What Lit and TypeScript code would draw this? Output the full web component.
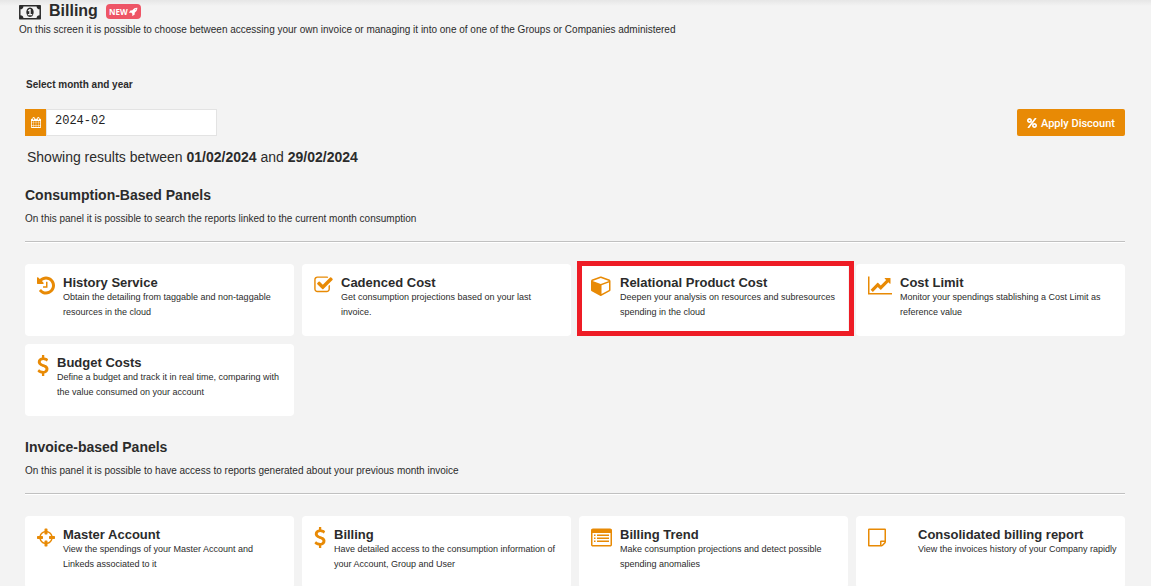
import { LitElement, html, css, svg, nothing } from "lit";
import { customElement, property } from "lit/decorators.js";

interface Glyph {
  box: string;
  width: number;
  path: string;
}

const glyphs: Record<string, Glyph> = {
  money: {
    box: "0 0 1920 1664",
    width: 22,
    path: "M768 1152h384v-96h-128v-448h-114l-148 137 77 80q42-37 55-57h2v288h-128v96zm512-256q0 70-21 142t-59.5 134-101.5 101-138 39-138-39-101.5-101-59.5-134-21-142 21-142 59.5-134 101.5-101 138-39 138 39 101.5 101 59.5 134 21 142zm512 256v-512q-106 0-181-75t-75-181h-1152q0 106-75 181t-181 75v512q106 0 181 75t75 181h1152q0-106 75-181t181-75zm128-832v1152q0 26-19 45t-45 19h-1792q-26 0-45-19t-19-45v-1152q0-26 19-45t45-19h1792q26 0 45 19t19 45z",
  },
  rocket: {
    box: "0 0 1792 1792",
    width: 9,
    path: "M1440 448q0-40-28-68t-68-28-68 28-28 68 28 68 68 28 68-28 28-68zm224-288q0 249-75.5 430.5t-253.5 360.5q-81 80-195 176l-20 379q-2 16-16 26l-384 224q-7 4-16 4-12 0-23-9l-64-64q-13-14-8-32l85-276-281-281-276 85q-3 1-9 1-14 0-23-9l-64-64q-17-19-5-39l224-384q10-14 26-16l379-20q96-114 176-195 188-187 358-258t431-71q14 0 24 9.5t10 22.5z",
  },
  calendar: {
    box: "64 0 1664 1792",
    width: 10,
    path: "M192 1664h288v-288h-288v288zm352 0h320v-288h-320v288zm-352-352h288v-320h-288v320zm352 0h320v-320h-320v320zm-352-384h288v-288h-288v288zm736 736h320v-288h-320v288zm-384-736h320v-288h-320v288zm768 736h288v-288h-288v288zm-384-352h320v-320h-320v320zm-352-864v-288q0-13-9.500-22.500t-22.500-9.500h-64q-13 0-22.500 9.500t-9.500 22.500v288q0 13 9.500 22.500t22.500 9.500h64q13 0 22.500-9.500t9.500-22.500zm736 864h288v-320h-288v320zm-384-384h320v-288h-320v288zm384 0h288v-288h-288v288zm32-480v-288q0-13-9.500-22.500t-22.500-9.500h-64q-13 0-22.500 9.500t-9.500 22.500v288q0 13 9.500 22.500t22.500 9.500h64q13 0 22.500-9.500t9.500-22.500zm384-64v1280q0 52-38 90t-90 38h-1408q-52 0-90-38t-38-90v-1280q0-52 38-90t90-38h128v-96q0-66 47-113t113-47h64q66 0 113 47t47 113v96h384v-96q0-66 47-113t113-47h64q66 0 113 47t47 113v96h128q52 0 90 38t38 90z",
  },
  percent: {
    box: "128 0 1536 1792",
    width: 10,
    path: "M1408 1280q0-52-38-90t-90-38-90 38-38 90 38 90 90 38 90-38 38-90zm-768-768q0-52-38-90t-90-38-90 38-38 90 38 90 90 38 90-38 38-90zm1024 768q0 159-112.500 271.500t-271.500 112.500-271.500-112.500-112.500-271.500 112.500-271.500 271.500-112.500 271.500 112.500 112.500 271.500zm-96-1088q0 20-13 38l-1056 1408q-19 26-51 26h-160q-26 0-45-19t-19-45q0-20 13-38l1056-1408q19-26 51-26h160q26 0 45 19t19 45zm-672 320q0 159-112.500 271.500t-271.500 112.500-271.500-112.500-112.500-271.500 112.500-271.500 271.500-112.500 271.500 112.500 112.500 271.500z",
  },
  history: {
    box: "128 0 1536 1792",
    width: 18,
    path: "M1664 896q0 156-61 298t-164 245-245 164-298 61q-172 0-327-72.5t-264-204.5q-7-10-6.5-22.5t8.500-20.500l137-138q10-9 25-9 16 2 23 12 73 95 179 147t225 52q104 0 198.500-40.500t163.500-109.500 109.500-163.500 40.500-198.500-40.500-198.500-109.500-163.500-163.500-109.500-198.500-40.500q-98 0-188 35.500t-160 101.500l137 138q31 30 14 69-17 40-59 40h-448q-26 0-45-19t-19-45v-448q0-42 40-59 39-17 69 14l130 129q107-101 244.500-156.500t284.500-55.500q156 0 298 61t245 164 164 245 61 298zm-640-288v448q0 14-9 23t-23 9h-320q-14 0-23-9t-9-23v-64q0-14 9-23t23-9h224v-352q0-14 9-23t23-9h64q14 0 23 9t9 23z",
  },
  check: {
    box: "64 0 1664 1792",
    width: 19,
    path: "M1472 930v318q0 119-84.500 203.500t-203.500 84.500h-832q-119 0-203.500-84.500t-84.500-203.500v-832q0-119 84.500-203.500t203.500-84.500h832q63 0 117 25 15 7 18 23 3 17-9 29l-49 49q-10 10-23 10-3 0-9-2-23-6-45-6h-832q-66 0-113 47t-47 113v832q0 66 47 113t113 47h832q66 0 113-47t47-113v-254q0-13 9-22l64-64q10-10 23-10 6 0 12 3 20 8 20 29zm231-489l-814 814q-24 24-57 24t-57-24l-430-430q-24-24-24-57t24-57l110-110q24-24 57-24t57 24l263 263 647-647q24-24 57-24t57 24l110 110q24 24 24 57t-24 57z",
  },
  cube: {
    box: "0 0 1792 1792",
    width: 21,
    path: "M896 1629l640-349v-636l-640 233v752zm-64-865l698-254-698-254-698 254zm832-252v768q0 35-18 65t-49 47l-704 384q-28 16-61 16t-61-16l-704-384q-31-17-49-47t-18-65v-768q0-40 23-73t61-47l704-256q22-8 44-8t44 8l704 256q38 14 61 47t23 73z",
  },
  chart: {
    box: "0 0 2048 1792",
    width: 24,
    path: "M2048 1536v128h-2048v-1536h128v1408h1920zm-128-1248v435q0 21-19.500 29.500t-35.500-7.500l-121-121-633 633q-10 10-23 10t-23-10l-233-233-416 416-192-192 585-585q10-10 23-10t23 10l233 233 464-464-121-121q-16-16-7.500-35.500t29.500-19.500h435q14 0 23 9t9 23z",
  },
  dollar: {
    box: "384 0 1024 1792",
    width: 12,
    path: "M1362 1185q0 153-99.500 263.500t-258.500 136.500v175q0 14-9 23t-23 9h-135q-13 0-22.500-9.500t-9.500-22.500v-175q-66-9-127.500-31t-101.500-44.500-74-48-46.500-37.500-17.500-18q-17-21-2-41l103-135q7-10 23-12 15-2 24 9l2 2q113 99 243 125 37 8 74 8 81 0 142.500-43t61.500-122q0-28-15-53t-33.500-42-58.500-37.500-66-32-80-32.500q-39-16-61.500-25t-61.500-26.500-62.500-31-56.500-35.500-53.500-42.500-43.500-49-35.500-58-21-66.500-8.500-78q0-138 98-242t255-134v-180q0-13 9.500-22.500t22.500-9.500h135q14 0 23 9t9 23v176q57 6 110.500 23t87 33.500 63.500 37.500 39 29 15 14q17 18 5 38l-81 146q-8 15-23 16-14 3-27-7-3-3-14.500-12t-39-26.500-58.500-32-74.500-26-85.500-11.500q-95 0-155 43t-60 111q0 26 8.500 48t29.500 41.500 39.500 33 56 31 60.500 27 70 27.500q53 20 81 31.500t76 35 75.500 42.500 62 50 53 63.500 31.500 76.500 13 94z",
  },
  crosshairs: {
    box: "128 0 1536 1792",
    width: 18,
    path: "M1325 1024h-109q-26 0-45-19t-19-45v-128q0-26 19-45t45-19h109q-32-108-112.500-188.500t-188.500-112.500v109q0 26-19 45t-45 19h-128q-26 0-45-19t-19-45v-109q-108 32-188.500 112.500t-112.500 188.500h109q26 0 45 19t19 45v128q0 26-19 45t-45 19h-109q32 108 112.500 188.500t188.500 112.500v-109q0-26 19-45t45-19h128q26 0 45 19t19 45v109q108-32 188.500-112.500t112.500-188.500zm339-192v128q0 26-19 45t-45 19h-143q-37 161-154.500 278.500t-278.500 154.500v143q0 26-19 45t-45 19h-128q-26 0-45-19t-19-45v-143q-161-37-278.500-154.500t-154.500-278.500h-143q-26 0-45-19t-19-45v-128q0-26 19-45t45-19h143q37-161 154.500-278.500t278.500-154.500v-143q0-26 19-45t45-19h128q26 0 45 19t19 45v143q161 37 278.500 154.500t154.500 278.500h143q26 0 45 19t19 45z",
  },
  list: {
    box: "0 0 1792 1792",
    width: 21,
    path: "M160 128h1472q66 0 113 47t47 113v1216q0 66-47 113t-113 47h-1472q-66 0-113-47t-47-113v-1216q0-66 47-113t113-47zM128 512v992q0 32 32 32h1472q32 0 32-32v-992zM256 640h128v128h-128zM256 896h128v128h-128zM256 1152h128v128h-128zM512 640h1024v128h-1024zM512 896h1024v128h-1024zM512 1152h1024v128h-1024z",
  },
  note: {
    box: "0 0 1536 1792",
    width: 18,
    path: "M1400 1280h-248v248q29-10 41-22l185-185q12-12 22-41zm-280-128h288v-896h-1280v1280h896v-288q0-40 28-68t68-28zm416-928v1024q0 40-20 88t-48 76l-184 184q-28 28-76 48t-88 20h-1024q-40 0-68-28t-28-68v-1344q0-40 28-68t68-28h1344q40 0 68 28t28 68z",
  },
};

const icon = (name: string) => {
  const g = glyphs[name];
  const [, , w, h] = g.box.split(" ").map(Number);
  return html`<svg
    class="icon"
    aria-hidden="true"
    viewBox=${g.box}
    width=${g.width}
    height=${Math.round((g.width * h) / w)}
  >
    ${svg`<path fill="currentColor" fill-rule="evenodd" d=${g.path}></path>`}
  </svg>`;
};

interface Panel {
  icon: string;
  title: string;
  text: string;
  highlighted?: boolean;
  indented?: boolean;
}

const consumptionPanels: Panel[] = [
  { icon: "history", title: "History Service", text: "Obtain the detailing from taggable and non-taggable resources in the cloud" },
  { icon: "check", title: "Cadenced Cost", text: "Get consumption projections based on your last invoice." },
  { icon: "cube", title: "Relational Product Cost", text: "Deepen your analysis on resources and subresources spending in the cloud", highlighted: true },
  { icon: "chart", title: "Cost Limit", text: "Monitor your spendings stablishing a Cost Limit as reference value" },
  { icon: "dollar", title: "Budget Costs", text: "Define a budget and track it in real time, comparing with the value consumed on your account" },
];

const invoicePanels: Panel[] = [
  { icon: "crosshairs", title: "Master Account", text: "View the spendings of your Master Account and Linkeds associated to it" },
  { icon: "dollar", title: "Billing", text: "Have detailed access to the consumption information of your Account, Group and User" },
  { icon: "list", title: "Billing Trend", text: "Make consumption projections and detect possible spending anomalies" },
  { icon: "note", title: "Consolidated billing report", text: "View the invoices history of your Company rapidly", indented: true },
];

@customElement("panel-card")
export class PanelCard extends LitElement {
  @property({ attribute: false }) panel!: Panel;

  static styles = css`
    :host {
      display: block;
      position: relative;
    }
    .card {
      box-sizing: border-box;
      display: flex;
      gap: 8px;
      height: 100%;
      min-height: 72px;
      padding: 11px 12px;
      border-radius: 4px;
      background: #fff;
      color: #2b2b2b;
      text-decoration: none;
    }
    .icon {
      flex: none;
      display: block;
      color: #e88a05;
    }
    .indented {
      padding-left: 24px;
      white-space: nowrap;
    }
    .title {
      margin: 0;
      font-size: 13px;
      line-height: 15px;
      font-weight: 700;
    }
    .text {
      margin: 0;
      font-size: 9px;
      line-height: 15px;
    }
    .marker {
      position: absolute;
      inset: -3px -6px 0 -2px;
      border: 5px solid #ee1c25;
      pointer-events: none;
      z-index: 1;
    }
  `;

  render() {
    const p = this.panel;
    return html`
      <a class="card" href="#">
        ${icon(p.icon)}
        <div class=${p.indented ? "indented" : "body"}>
          <h3 class="title">${p.title}</h3>
          <p class="text">${p.text}</p>
        </div>
      </a>
      ${p.highlighted ? html`<div class="marker"></div>` : nothing}
    `;
  }
}

@customElement("app-root")
export class AppRoot extends LitElement {
  static styles = css`
    :host {
      display: block;
      min-height: 100vh;
      background: linear-gradient(#e6e6e6, #f3f3f3 6px);
      color: #2b2b2b;
      font-family: "Liberation Sans", Arial, sans-serif;
    }
    .icon {
      display: block;
      flex: none;
    }
    .head {
      padding: 1px 19px 0;
    }
    .heading {
      display: flex;
      align-items: center;
      gap: 8px;
      height: 20px;
      margin-bottom: 1px;
    }
    .name {
      margin: 0;
      font-size: 16px;
      line-height: 20px;
    }
    .badge {
      display: flex;
      align-items: center;
      gap: 1px;
      height: 15px;
      padding: 0 3px;
      border-radius: 4px;
      background: #ee5566;
      color: #fff;
      font: 700 8px/15px "Open Sans", sans-serif;
    }
    .note {
      margin: 0;
      font-size: 10px;
      line-height: 16px;
    }
    .content {
      padding: 39px 26px 0 25px;
    }
    .label {
      display: block;
      padding-left: 1px;
      font-size: 10px;
      line-height: 16px;
      font-weight: 700;
    }
    .tools {
      display: flex;
      justify-content: space-between;
      margin-top: 16px;
    }
    .month {
      display: flex;
      width: 192px;
      height: 27px;
    }
    .addon {
      display: flex;
      align-items: center;
      justify-content: center;
      width: 21px;
      flex: none;
      background: #e88a05;
      color: #fff;
    }
    .input {
      box-sizing: border-box;
      flex: 1;
      min-width: 0;
      padding: 0 8px 4px;
      border: 1px solid #e3e3e3;
      border-radius: 0;
      background: #fff;
      color: #222;
      font: 12px "Liberation Mono", monospace;
    }
    .apply {
      display: flex;
      align-items: center;
      gap: 4px;
      height: 27px;
      padding: 1px 10px 0;
      border: 0;
      border-radius: 2px;
      background: #e88a05;
      color: #fff;
      font: 500 11px Roboto, "Liberation Sans", sans-serif;
    }
    .range {
      margin: 11px 0 0 2px;
      font-size: 14px;
      line-height: 20px;
    }
    .section {
      margin-top: 18px;
    }
    .section + .section {
      margin-top: 21px;
    }
    .section-title {
      margin: 0 0 6px;
      font-size: 14px;
      line-height: 20px;
    }
    .rule {
      margin: 14px 0 21px;
      border: 0;
      border-top: 1px solid #c0c0c0;
      border-bottom: 1px solid #fff;
    }
    .cards {
      display: grid;
      grid-template-columns: repeat(4, minmax(0, 1fr));
      gap: 8px;
    }
  `;

  private section(title: string, note: string, panels: Panel[]) {
    return html`
      <section class="section">
        <h2 class="section-title">${title}</h2>
        <p class="note">${note}</p>
        <hr class="rule" />
        <div class="cards">
          ${panels.map((p) => html`<panel-card .panel=${p}></panel-card>`)}
        </div>
      </section>
    `;
  }

  render() {
    return html`
      <header class="head">
        <div class="heading">
          ${icon("money")}
          <h1 class="name">Billing</h1>
          <span class="badge">NEW ${icon("rocket")}</span>
        </div>
        <p class="note">
          On this screen it is possible to choose between accessing your own invoice or managing it into one of one of the Groups or Companies administered
        </p>
      </header>
      <main class="content">
        <label class="label" for="month">Select month and year</label>
        <div class="tools">
          <div class="month">
            <span class="addon">${icon("calendar")}</span>
            <input class="input" id="month" type="text" value="2024-02" />
          </div>
          <button class="apply" type="button">${icon("percent")} Apply Discount</button>
        </div>
        <p class="range">Showing results between <b>01/02/2024</b> and <b>29/02/2024</b></p>
        ${this.section(
          "Consumption-Based Panels",
          "On this panel it is possible to search the reports linked to the current month consumption",
          consumptionPanels,
        )}
        ${this.section(
          "Invoice-based Panels",
          "On this panel it is possible to have access to reports generated about your previous month invoice",
          invoicePanels,
        )}
      </main>
    `;
  }
}
